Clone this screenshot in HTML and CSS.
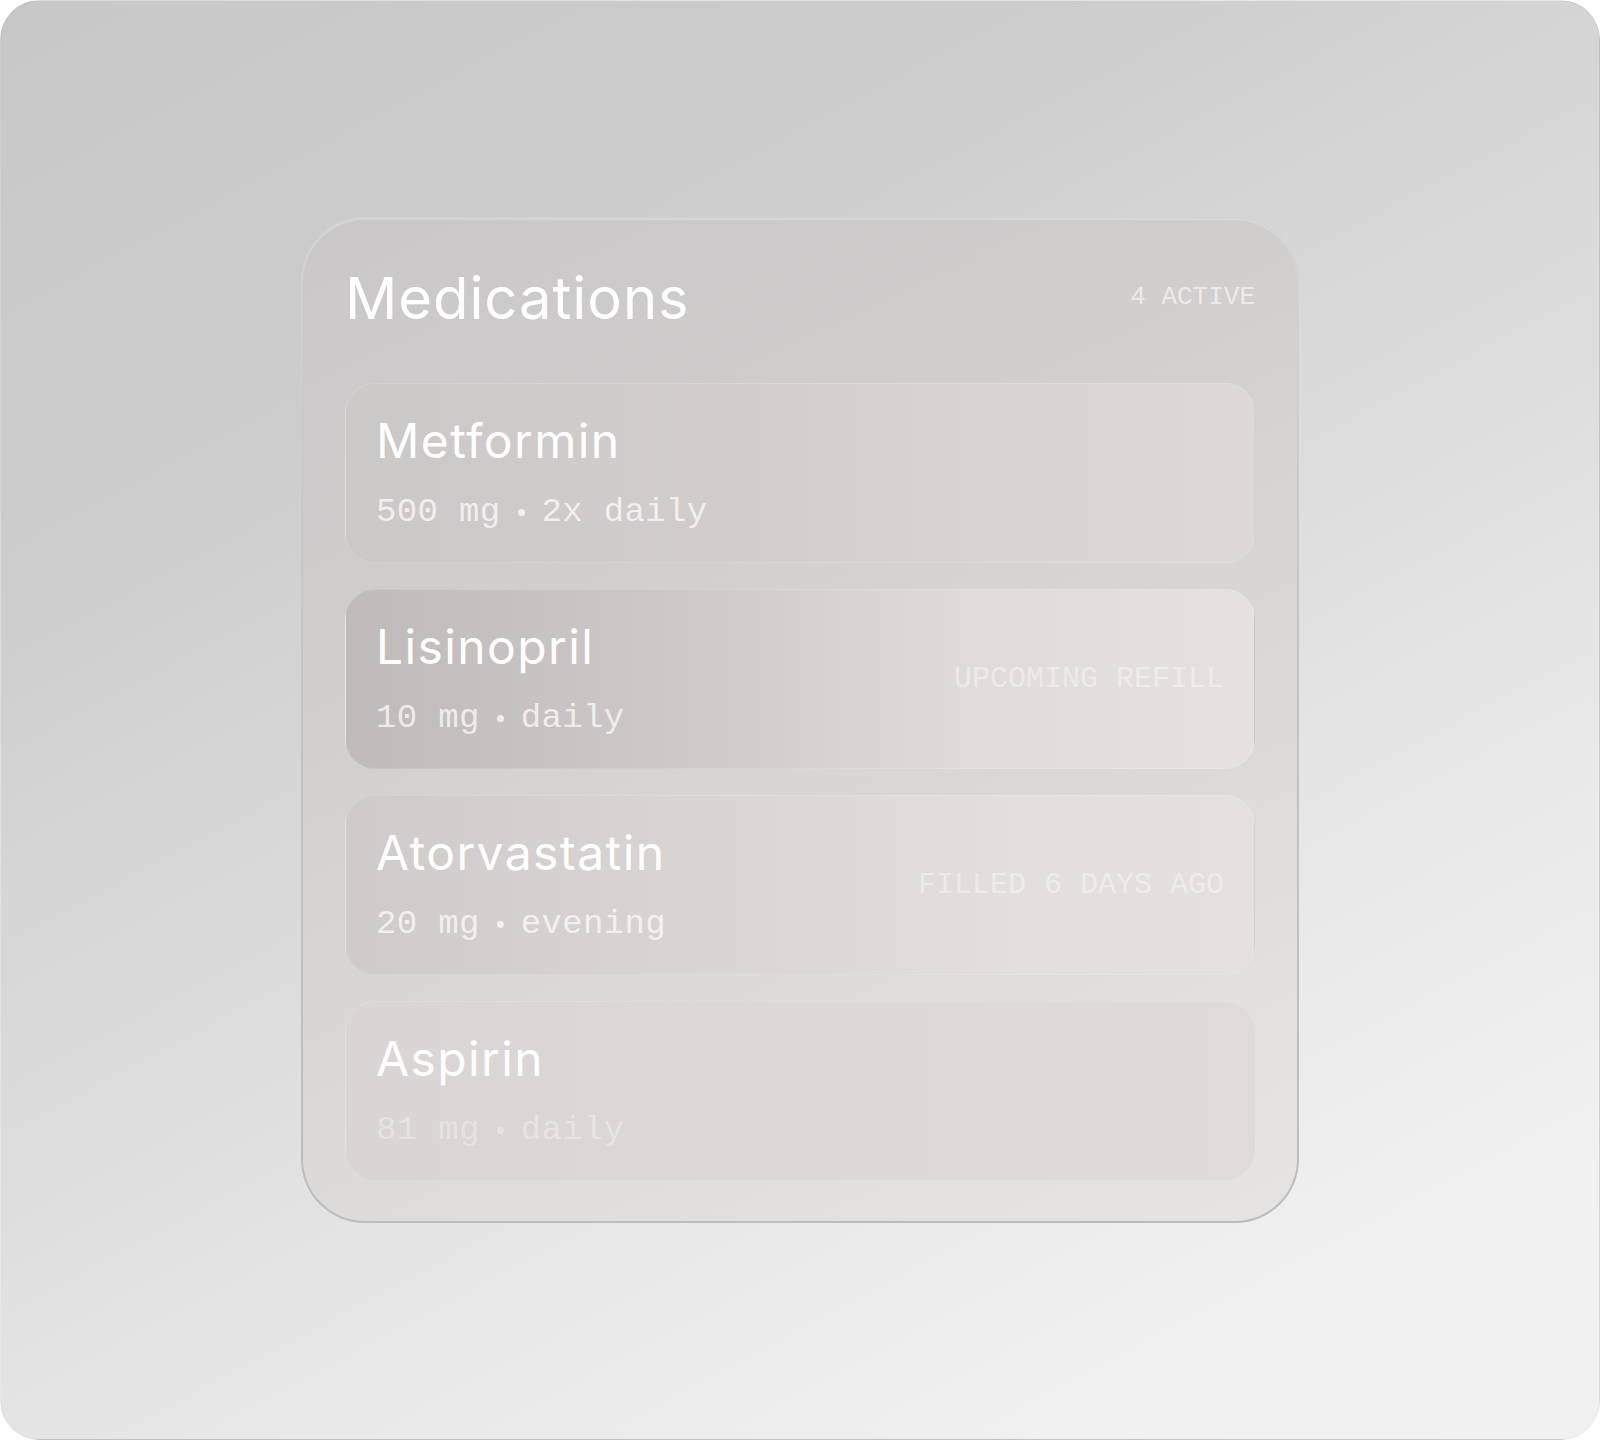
FILE: index.html
```html
<!DOCTYPE html>
<html lang="en">
<head>
<meta charset="utf-8">
<title>Medications</title>
<link rel="stylesheet" href="styles.css">
</head>
<body>
<div class="frame">
  <section class="panel">
    <header class="panel-head">
      <h1 class="title">Medications</h1>
      <span class="count">4 ACTIVE</span>
    </header>
    <ul class="list">
      <li class="row row-1">
        <div class="info">
          <div class="name">Metformin</div>
          <div class="dose"><span>500 mg</span><i class="dot"></i><span>2x daily</span></div>
        </div>
      </li>
      <li class="row row-2">
        <div class="info">
          <div class="name">Lisinopril</div>
          <div class="dose"><span>10 mg</span><i class="dot"></i><span>daily</span></div>
        </div>
        <span class="status">UPCOMING REFILL</span>
      </li>
      <li class="row row-3">
        <div class="info">
          <div class="name">Atorvastatin</div>
          <div class="dose"><span>20 mg</span><i class="dot"></i><span>evening</span></div>
        </div>
        <span class="status">FILLED 6 DAYS AGO</span>
      </li>
      <li class="row row-4">
        <div class="info">
          <div class="name">Aspirin</div>
          <div class="dose faint"><span>81 mg</span><i class="dot"></i><span>daily</span></div>
        </div>
      </li>
    </ul>
  </section>
</div>
</body>
</html>
```

FILE: styles.css
```css
html, body {
  margin: 0;
  padding: 0;
  background: #ffffff;
}

body {
  width: 1600px;
  height: 1440px;
  overflow: hidden;
  font-family: Inter, "Noto Sans", sans-serif;
}

.frame {
  box-sizing: border-box;
  width: 1600px;
  height: 1440px;
  border-radius: 40px;
  border: 1px solid rgba(0, 0, 0, 0.04);
  background: linear-gradient(152deg, #c7c7c7 0%, #cdcdcd 25%, #dcdcdc 50%, #eaeaea 72%, #f1f1f1 88%, #f1f1f1 100%);
  display: flex;
  align-items: center;
  justify-content: center;
}

.panel {
  box-sizing: border-box;
  width: 998px;
  padding: 42px 42px 40px;
  border-radius: 64px;
  border: 2px solid transparent;
  background:
    linear-gradient(155deg, #c9c7c7 0%, #d0cecd 30%, #dad8d7 60%, #e2e1e0 85%, #e5e4e3 100%) padding-box,
    linear-gradient(180deg, #d4d4d4 0%, #c6c5c5 40%, #bdbbbb 100%) border-box;
  box-shadow: inset 0 1px 0 rgba(255, 255, 255, 0.25);
}

.panel-head {
  display: flex;
  align-items: center;
  justify-content: space-between;
  height: 74px;
  margin-bottom: 48px;
}

.title {
  margin: 0;
  font-family: Inter, sans-serif;
  font-weight: 400;
  font-size: 58px;
  line-height: 74px;
  color: #ffffff;
  letter-spacing: 0.9px;
}

.count {
  font-family: "Liberation Mono", "DejaVu Sans Mono", monospace;
  font-size: 26px;
  line-height: 1;
  color: rgba(255, 251, 250, 0.64);
  margin-top: -2px;
}

.list {
  list-style: none;
  margin: 0;
  padding: 0;
  display: flex;
  flex-direction: column;
  gap: 26px;
}

.row {
  box-sizing: border-box;
  height: 180px;
  padding: 30px;
  border-radius: 30px;
  border: 1px solid rgba(255, 255, 255, 0.16);
  display: flex;
  align-items: center;
  justify-content: space-between;
}

.row-1 {
  background: linear-gradient(90deg, #cbc8c8 0%, #d0cdcc 40%, #d8d5d4 75%, #dbd8d7 100%);
}

.row-2 {
  background: linear-gradient(90deg, #bebbba 0%, #cbc8c7 35%, #dfdcda 70%, #e4e1df 100%);
}

.row-3 {
  background: linear-gradient(90deg, #cecbca 0%, #d8d5d4 40%, #e2dfde 75%, #e3e0df 100%);
}

.row-4 {
  background: linear-gradient(90deg, #d8d5d4 0%, #dcd9d8 50%, #dedbda 100%);
}

.info {
  display: flex;
  flex-direction: column;
  gap: 30px;
}

.name {
  font-family: Inter, sans-serif;
  font-size: 48px;
  line-height: 1;
  color: #ffffff;
  letter-spacing: 1.4px;
}

.dose {
  display: flex;
  align-items: center;
  gap: 17px;
  font-family: "Liberation Mono", "DejaVu Sans Mono", monospace;
  font-size: 34px;
  line-height: 1;
  letter-spacing: 0.35px;
  color: rgba(255, 251, 250, 0.76);
}

.dose.faint {
  color: rgba(255, 251, 250, 0.38);
}

.dot {
  display: block;
  width: 7px;
  height: 7px;
  border-radius: 50%;
  background: currentColor;
}

.status {
  font-family: "Liberation Mono", "DejaVu Sans Mono", monospace;
  font-size: 30px;
  line-height: 1;
  color: rgba(255, 251, 250, 0.46);
}
```
